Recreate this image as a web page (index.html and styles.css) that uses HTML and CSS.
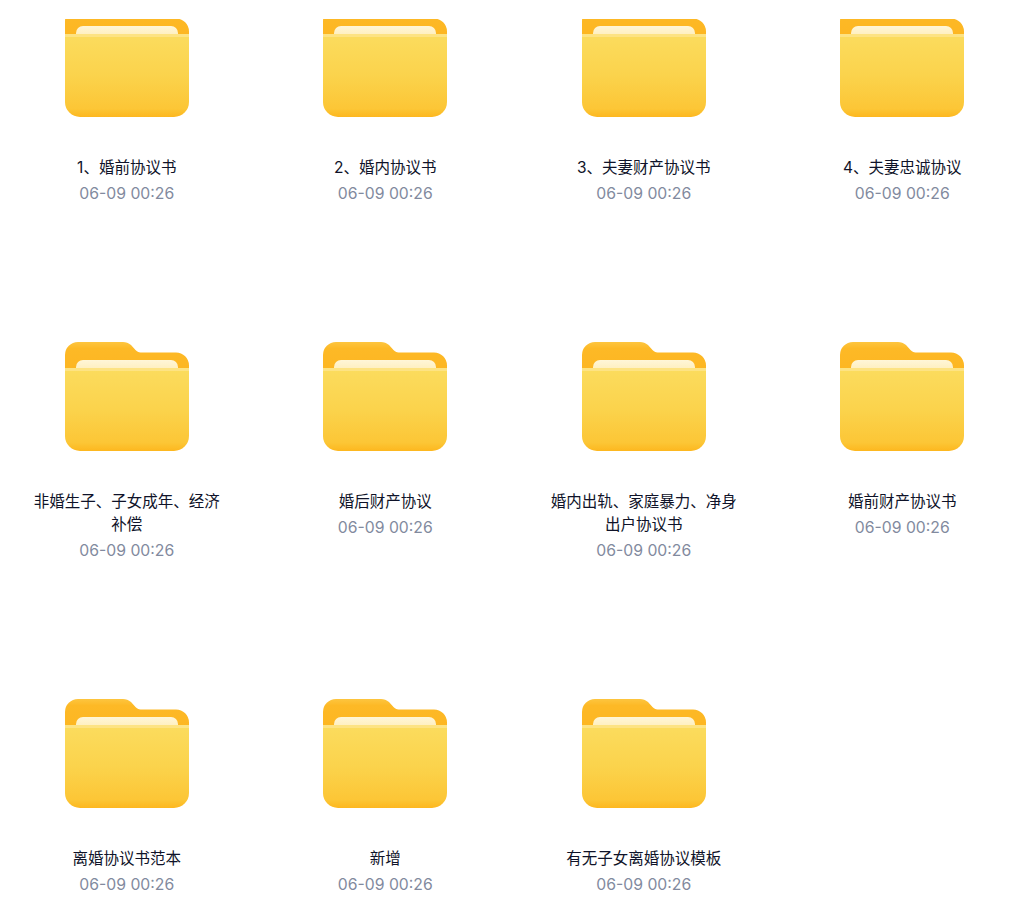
FILE: index.html
```html
<!DOCTYPE html>
<html lang="zh-CN">
<head>
    <meta charset="UTF-8">
    <meta name="viewport" content="width=device-width, initial-scale=1.0">
    <title>文件列表</title>
    <link rel="stylesheet" href="styles.css">
</head>
<body>
    <svg class="defs" width="0" height="0" aria-hidden="true">
        <defs>
            <linearGradient id="back" x1="0" y1="0" x2="0" y2="1">
                <stop offset="0" stop-color="#fdc53f"/>
                <stop offset="0.15" stop-color="#fdb926"/>
                <stop offset="1" stop-color="#fdb41f"/>
            </linearGradient>
            <linearGradient id="front" x1="0" y1="0" x2="0" y2="1">
                <stop offset="0" stop-color="#fbdc5e"/>
                <stop offset="0.5" stop-color="#fbd34c"/>
                <stop offset="0.9" stop-color="#fcc636"/>
                <stop offset="0.94" stop-color="#fcc02c"/>
                <stop offset="1" stop-color="#fdb71f"/>
            </linearGradient>
            <linearGradient id="paper" x1="0" y1="0" x2="0" y2="1">
                <stop offset="0" stop-color="#fff6d8"/>
                <stop offset="1" stop-color="#fee7a0"/>
            </linearGradient>
            <symbol id="folder" viewBox="0 0 124 109">
                <path d="M0 13a13 13 0 0 1 13-13h45c3 0 5.500 1 8 3l4.500 5c1.500 1.500 3 2.500 5 2.500h35.500a13 13 0 0 1 13 13v20h-124z" fill="url(#back)"/>
                <rect x="11" y="18" width="102" height="20" rx="7" fill="url(#paper)"/>
                <path d="M0 26h124v68a15 15 0 0 1-15 15h-94a15 15 0 0 1-15-15z" fill="url(#front)"/>
                <rect x="0" y="26" width="124" height="3" fill="#fee590" opacity="0.75"/>
            </symbol>
        </defs>
    </svg>

    <div class="viewport">
        <div class="file-grid">
            <div class="file-item">
                <svg class="folder-icon"><use href="#folder"/></svg>
                <div class="file-name">1、婚前协议书</div>
                <div class="file-time">06-09 00:26</div>
            </div>
            <div class="file-item">
                <svg class="folder-icon"><use href="#folder"/></svg>
                <div class="file-name">2、婚内协议书</div>
                <div class="file-time">06-09 00:26</div>
            </div>
            <div class="file-item">
                <svg class="folder-icon"><use href="#folder"/></svg>
                <div class="file-name">3、夫妻财产协议书</div>
                <div class="file-time">06-09 00:26</div>
            </div>
            <div class="file-item">
                <svg class="folder-icon"><use href="#folder"/></svg>
                <div class="file-name">4、夫妻忠诚协议</div>
                <div class="file-time">06-09 00:26</div>
            </div>
            <div class="file-item">
                <svg class="folder-icon"><use href="#folder"/></svg>
                <div class="file-name">非婚生子、子女成年、经济补偿</div>
                <div class="file-time">06-09 00:26</div>
            </div>
            <div class="file-item">
                <svg class="folder-icon"><use href="#folder"/></svg>
                <div class="file-name">婚后财产协议</div>
                <div class="file-time">06-09 00:26</div>
            </div>
            <div class="file-item">
                <svg class="folder-icon"><use href="#folder"/></svg>
                <div class="file-name">婚内出轨、家庭暴力、净身出户协议书</div>
                <div class="file-time">06-09 00:26</div>
            </div>
            <div class="file-item">
                <svg class="folder-icon"><use href="#folder"/></svg>
                <div class="file-name">婚前财产协议书</div>
                <div class="file-time">06-09 00:26</div>
            </div>
            <div class="file-item">
                <svg class="folder-icon"><use href="#folder"/></svg>
                <div class="file-name">离婚协议书范本</div>
                <div class="file-time">06-09 00:26</div>
            </div>
            <div class="file-item">
                <svg class="folder-icon"><use href="#folder"/></svg>
                <div class="file-name">新增</div>
                <div class="file-time">06-09 00:26</div>
            </div>
            <div class="file-item">
                <svg class="folder-icon"><use href="#folder"/></svg>
                <div class="file-name">有无子女离婚协议模板</div>
                <div class="file-time">06-09 00:26</div>
            </div>
        </div>
    </div>
</body>
</html>
```

FILE: styles.css
```css
html, body {
    margin: 0;
    padding: 0;
    height: 100%;
    background-color: #fff;
    overflow: hidden;
}
body {
    font-family: Inter, "Noto Sans CJK SC", sans-serif;
}
.defs {
    display: block;
    height: 0;
}
.viewport {
    height: 894px;
    margin-top: 19px;
    overflow: hidden;
}
.file-grid {
    display: grid;
    grid-template-columns: repeat(4, 200px);
    column-gap: 58.5px;
    row-gap: 137.5px;
    margin-top: -11px;
    padding-left: 26.75px;
}
.file-item {
    display: flex;
    flex-direction: column;
    align-items: center;
    text-align: center;
}
.folder-icon {
    display: block;
    width: 124px;
    height: 109px;
    margin-bottom: 38.5px;
    filter: blur(0.4px);
}
.file-name {
    width: 100%;
    font-size: 15.5px;
    line-height: 23px;
    color: #0f1329;
}
.file-time {
    margin-top: 3px;
    font-size: 15.75px;
    line-height: 23px;
    color: #828a9e;
}
```
